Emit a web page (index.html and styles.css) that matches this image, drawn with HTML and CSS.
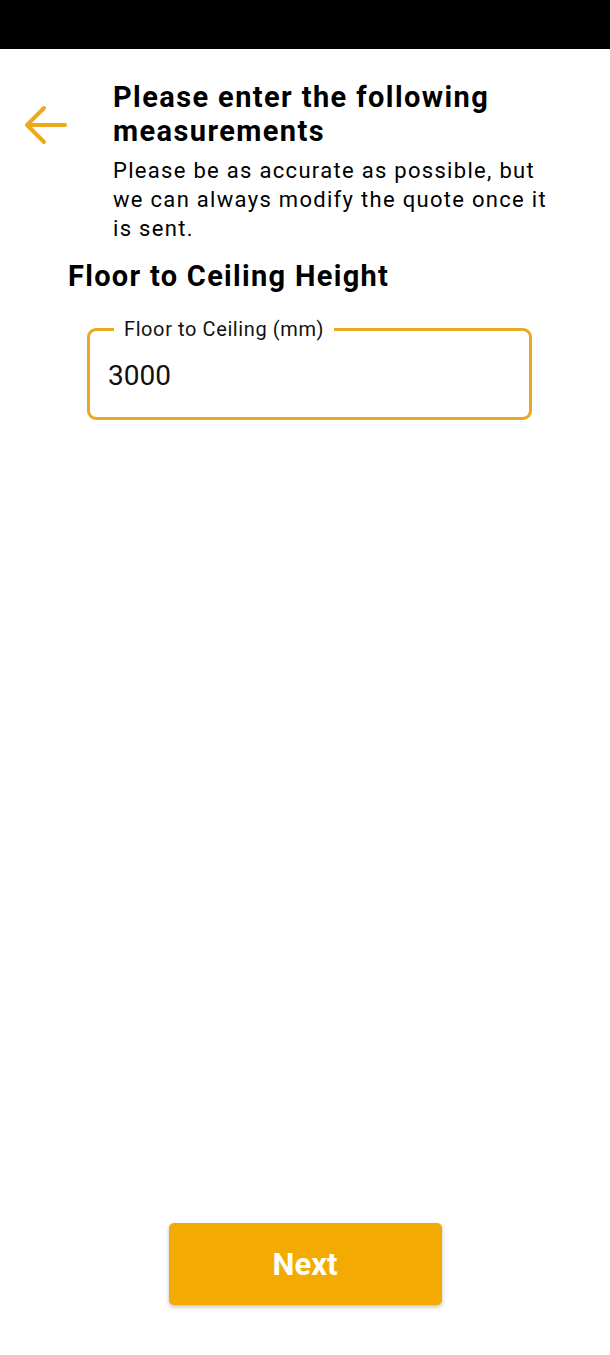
FILE: index.html
```html
<!DOCTYPE html>
<html lang="en">
<head>
    <meta charset="UTF-8">
    <meta name="viewport" content="width=device-width, initial-scale=1.0">
    <title>Measurements</title>
    <link rel="stylesheet" href="styles.css">
</head>
<body>
    <div class="status-bar"></div>
    <div class="page">
        <div class="header">
            <button class="back" aria-label="Back">
                <svg width="44" height="44" viewBox="0 0 44 44" fill="none" stroke="#eda91c" stroke-width="4" stroke-linecap="round" stroke-linejoin="round">
                    <path d="M41 22 H4"/>
                    <path d="M20 5 L3 22 L20 39"/>
                </svg>
            </button>
            <div class="intro">
                <h1>Please enter the following measurements</h1>
                <p>Please be as accurate as possible, but we can always modify the quote once it is sent.</p>
            </div>
        </div>

        <h2>Floor to Ceiling Height</h2>

        <fieldset class="field">
            <legend>Floor to Ceiling (mm)</legend>
            <input type="text" id="height" value="3000">
        </fieldset>
    </div>
    <div class="footer">
        <button class="button">Next</button>
    </div>
</body>
</html>
```

FILE: styles.css
```css
body {
    font-family: Roboto, "Liberation Sans", sans-serif;
    margin: 0;
    padding: 0;
    min-height: 100vh;
    display: flex;
    flex-direction: column;
    background: white;
    color: #000;
}
.status-bar {
    height: 49px;
    background: #000;
}
.page {
    flex: 1;
}
.header {
    display: flex;
    align-items: flex-start;
    padding: 31px 40px 0 24px;
}
.back {
    background: none;
    border: none;
    padding: 0;
    margin-top: 23px;
    margin-right: 45px;
    width: 44px;
    height: 44px;
    cursor: pointer;
}
.intro h1 {
    margin: 0;
    font-size: 29px;
    line-height: 34px;
    font-weight: bold;
    letter-spacing: 1.4px;
}
.intro p {
    margin: 8px 0 0;
    font-size: 22px;
    line-height: 29px;
    letter-spacing: 1.3px;
}
h2 {
    margin: 16px 0 0 68px;
    font-size: 29px;
    line-height: 34px;
    font-weight: bold;
    letter-spacing: 1.3px;
}
.field {
    margin: 24px 0 0 87px;
    width: 445px;
    box-sizing: border-box;
    border: 3px solid #e8a91c;
    border-radius: 9px;
    padding: 0 18px 24px;
}
.field legend {
    margin-left: 6px;
    padding: 0 10px;
    font-size: 20px;
    letter-spacing: 0.6px;
    color: #111;
}
.field input {
    width: 100%;
    border: none;
    outline: none;
    padding: 0;
    margin-top: 18px;
    font-family: inherit;
    font-size: 28px;
    line-height: 34px;
    color: #111;
    background: transparent;
}
.footer {
    display: flex;
    justify-content: center;
    padding-bottom: 50px;
}
.button {
    width: 273px;
    height: 82px;
    background-color: #f3aa03;
    color: white;
    border: none;
    border-radius: 5px;
    font-family: inherit;
    font-size: 31px;
    font-weight: bold;
    box-shadow: 0 2px 4px rgba(0, 0, 0, 0.25);
    cursor: pointer;
}
```
